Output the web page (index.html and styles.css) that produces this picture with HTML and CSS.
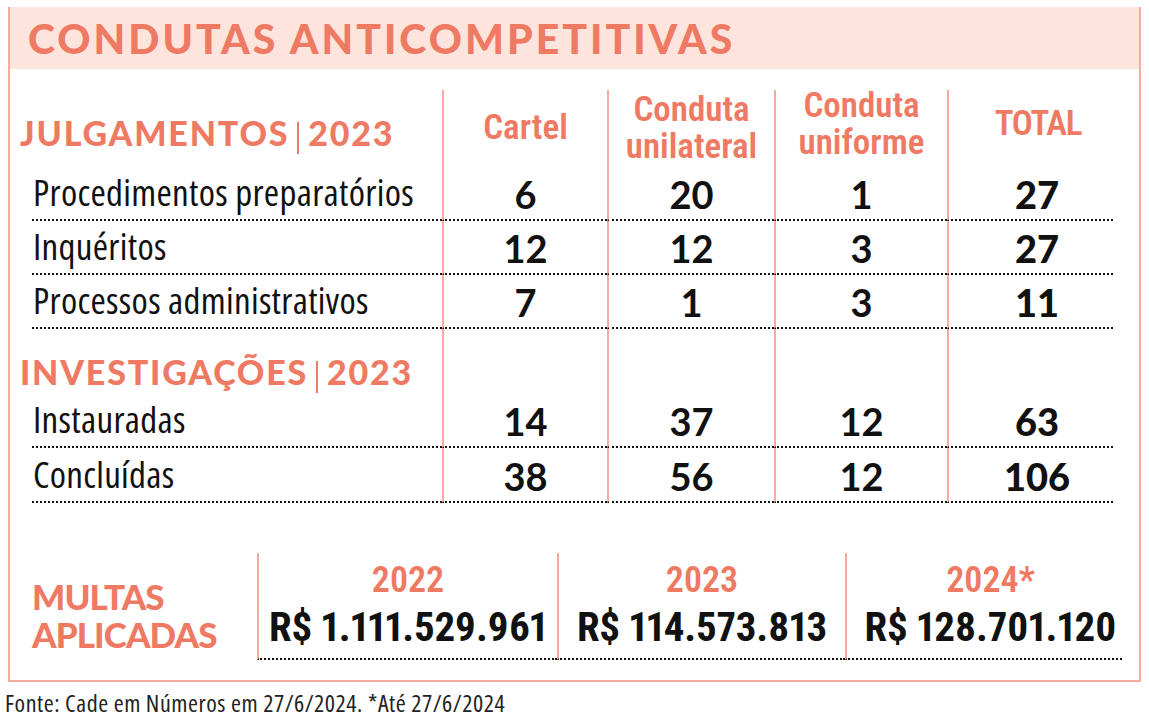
FILE: index.html
```html
<!DOCTYPE html>
<html lang="pt-BR">
<head>
<meta charset="utf-8">
<title>Condutas anticompetitivas</title>
<link rel="stylesheet" href="styles.css">
</head>
<body>
<div class="figure">
  <div class="banner"><h1 class="title">CONDUTAS ANTICOMPETITIVAS</h1></div>

  <div class="table">
    <div class="sec sec-first">JULGAMENTOS<span class="bar"></span>2023</div>
    <div class="ch">Cartel</div>
    <div class="ch">Conduta<br>unilateral</div>
    <div class="ch ch-up">Conduta<br>uniforme</div>
    <div class="ch ch-up ch-total">TOTAL</div>

    <div class="lbl">Procedimentos preparatórios</div>
    <div class="num">6</div><div class="num">20</div><div class="num">1</div><div class="num tot">27</div>

    <div class="lbl">Inquéritos</div>
    <div class="num">12</div><div class="num">12</div><div class="num">3</div><div class="num tot">27</div>

    <div class="lbl">Processos administrativos</div>
    <div class="num">7</div><div class="num">1</div><div class="num">3</div><div class="num tot">11</div>

    <div class="sec sec-second">INVESTIGAÇÕES<span class="bar"></span>2023</div>
    <div class="blank"></div><div class="blank"></div><div class="blank"></div><div class="blank"></div>

    <div class="lbl">Instauradas</div>
    <div class="num">14</div><div class="num">37</div><div class="num">12</div><div class="num tot">63</div>

    <div class="lbl">Concluídas</div>
    <div class="num">38</div><div class="num">56</div><div class="num">12</div><div class="num tot">106</div>
  </div>

  <div class="fines">
    <div class="fines-label">MULTAS<br>APLICADAS</div>
    <div class="year">2022</div>
    <div class="year">2023</div>
    <div class="year year-last">2024*</div>
    <div class="value">R$ 1.111.529.961</div>
    <div class="value">R$ 114.573.813</div>
    <div class="value value-last">R$ 128.701.120</div>
  </div>
</div>
<p class="source">Fonte: Cade em Números em 27/6/2024. *Até 27/6/2024</p>
</body>
</html>
```

FILE: styles.css
```css
* { box-sizing: border-box; }

body {
  margin: 0;
  background: #ffffff;
  color: #111111;
  font-family: "Roboto", sans-serif;
  font-stretch: 75%;
}

.figure {
  width: 1133px;
  margin: 7px 0 0 8px;
  border: 2px solid #f6ab9c;
  border-top: none;
  padding-bottom: 20px;
}

.banner {
  background: #fde4dd;
  height: 62px;
  padding-left: 18px;
  display: flex;
  align-items: center;
}

.title {
  margin: 0;
  font-family: "Lato", sans-serif;
  font-stretch: 100%;
  font-weight: 900;
  font-size: 41px;
  letter-spacing: 3px;
  color: #ef7a63;
  line-height: 1;
}

/* ---- main table ---- */
.table {
  margin-top: 21px;
  display: grid;
  grid-template-columns: 22px 410px 165px 167px 173px 166px;
  grid-template-rows: 77px 54px 54px 54px 65px 54px 55px;
}

.sec {
  grid-column: 1 / span 2;
  padding-left: 10px;
  font-family: "Lato", sans-serif;
  font-stretch: 100%;
  font-weight: 900;
  font-size: 34px;
  letter-spacing: 1.8px;
  color: #ef7a63;
  display: flex;
  align-items: flex-end;
  line-height: 1;
  white-space: nowrap;
}
.sec-first { padding-bottom: 17px; }
.sec-second { padding-bottom: 5px; }

.bar {
  display: inline-block;
  width: 2px;
  height: 32px;
  background: #ef7a63;
  margin: 0 9px 0 8px;
  position: relative;
  top: 4px;
}

.ch {
  border-left: 2px solid #f6ab9c;
  display: flex;
  align-items: center;
  justify-content: center;
  text-align: center;
  color: #ef7a63;
  font-family: "Roboto", sans-serif;
  font-weight: 600;
  font-size: 35px;
  line-height: 37px;
  padding-bottom: 2px;
}
.ch-up { padding-bottom: 10px; }
.ch-total {
  padding-left: 14px;
  letter-spacing: -1.2px;
}

.lbl {
  grid-column: 2;
  border-bottom: 2px dotted #111;
  display: flex;
  align-items: center;
  padding-left: 1px;
  padding-bottom: 3px;
  font-family: "Open Sans", sans-serif;
  font-size: 37px;
  letter-spacing: 0.3px;
  white-space: nowrap;
}

.num {
  border-left: 2px solid #f6ab9c;
  border-bottom: 2px dotted #111;
  display: flex;
  align-items: center;
  justify-content: center;
  font-family: "Lato", sans-serif;
  font-stretch: 100%;
  font-weight: 700;
  font-size: 38px;
  padding-top: 2px;
}
.tot {
  font-weight: 900;
  padding-left: 12px;
}

.blank {
  border-left: 2px solid #f6ab9c;
}

/* ---- fines ---- */
.fines {
  margin-top: 50px;
  display: grid;
  grid-template-columns: 247px 300px 288px 277px;
  grid-template-rows: 45px 62px;
}

.fines-label {
  grid-row: 1 / span 2;
  padding-left: 22px;
  display: flex;
  align-items: flex-end;
  padding-bottom: 7px;
  font-family: "Lato", sans-serif;
  font-stretch: 100%;
  font-weight: 900;
  font-size: 35px;
  line-height: 38px;
  letter-spacing: -0.9px;
  color: #ef7a63;
}

.year {
  border-left: 2px solid #f6ab9c;
  display: flex;
  align-items: flex-end;
  justify-content: center;
  color: #ef7a63;
  font-weight: 600;
  font-size: 36px;
  line-height: 1;
}
.year-last, .value-last { padding-left: 12px; }

.value {
  border-left: 2px solid #f6ab9c;
  border-bottom: 2px dotted #111;
  display: flex;
  align-items: center;
  justify-content: center;
  font-weight: 700;
  font-size: 41px;
  letter-spacing: -0.2px;
  font-variant-numeric: proportional-nums;
  padding-bottom: 2px;
  white-space: nowrap;
}

.source {
  margin: 4px 0 0 5px;
  font-family: "Open Sans", sans-serif;
  font-size: 24px;
  letter-spacing: 0.55px;
  color: #222;
}
```
